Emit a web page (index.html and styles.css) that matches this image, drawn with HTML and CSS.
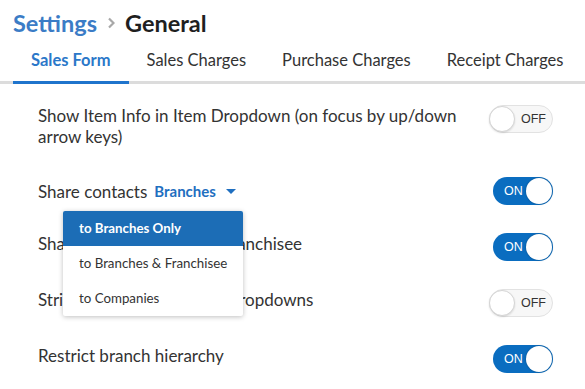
FILE: index.html
```html
<!DOCTYPE html>
<html lang="en">
  <head>
    <meta charset="UTF-8" />
    <meta name="viewport" content="width=device-width, initial-scale=1.0" />
    <title>Settings - General</title>
    <link rel="stylesheet" href="styles.css">
  </head>
  <body>
    <h1 class="page-title">
      <span class="crumb">Settings</span>
      <svg class="crumb-sep" width="8" height="12" viewBox="0 0 8 12">
        <path d="M2 1.5 L6.5 6 L2 10.5" fill="none" stroke="#a8a8a8" stroke-width="2.2" />
      </svg>
      <span class="current">General</span>
    </h1>

    <div class="tabs">
      <div class="tab active">Sales Form</div>
      <div class="tab">Sales Charges</div>
      <div class="tab">Purchase Charges</div>
      <div class="tab">Receipt Charges</div>
    </div>

    <div class="settings">
      <div class="row first">
        <div class="label">Show Item Info in Item Dropdown (on focus by up/down arrow keys)</div>
        <div class="toggle off"><span class="knob"></span><span class="state">OFF</span></div>
      </div>

      <div class="row share">
        <div class="label">
          Share contacts
          <span class="select">Branches <span class="caret"></span></span>
        </div>
        <div class="toggle on"><span class="state">ON</span><span class="knob"></span></div>

        <ul class="menu">
          <li class="selected">to Branches Only</li>
          <li>to Branches &amp; Franchisee</li>
          <li>to Companies</li>
        </ul>
      </div>

      <div class="row">
        <div class="label">Share items to Branch &amp; Franchisee</div>
        <div class="toggle on"><span class="state">ON</span><span class="knob"></span></div>
      </div>

      <div class="row">
        <div class="label">Strict branch wise data in dropdowns</div>
        <div class="toggle off"><span class="knob"></span><span class="state">OFF</span></div>
      </div>

      <div class="row">
        <div class="label">Restrict branch hierarchy</div>
        <div class="toggle on"><span class="state">ON</span><span class="knob"></span></div>
      </div>
    </div>
  </body>
</html>
```

FILE: styles.css
```css
body {
  margin: 0;
  font-family: Lato, "Open Sans", Arial, sans-serif;
  background-color: #fff;
  color: #333;
}

.page-title {
  margin: 0;
  padding: 6px 13px 0;
  height: 34px;
  display: flex;
  align-items: center;
  font-size: 23.5px;
  font-weight: 700;
}

.crumb {
  color: #3b7cc6;
}

.crumb-sep {
  margin: 0 10px 0 10px;
}

.current {
  color: #1f1f1f;
}

.tabs {
  display: flex;
  padding-left: 13px;
  border-bottom: 3px solid #dcdcdc;
  height: 41px;
}

.tab {
  padding: 10px 18px 0;
  font-size: 16.5px;
  color: #333;
  margin-bottom: -3px;
  border-bottom: 3px solid transparent;
}

.tab.active {
  color: #2b78c9;
  font-weight: 700;
  border-bottom-color: #1f74cc;
}

.settings {
  padding: 7px 32px 0 38px;
}

.row {
  display: flex;
  align-items: flex-start;
  justify-content: space-between;
  padding: 14px 0;
  position: relative;
}

.row.first {
  padding-bottom: 16px;
}

.label {
  font-size: 17px;
  line-height: 21px;
  max-width: 430px;
}

.share .label {
  display: flex;
  align-items: center;
  height: 28px;
}

.select {
  margin-left: 7px;
  color: #1f6fc0;
  font-weight: 700;
  font-size: 15px;
  display: flex;
  align-items: center;
}

.caret {
  margin-left: 10px;
  width: 0;
  height: 0;
  border-left: 5px solid transparent;
  border-right: 5px solid transparent;
  border-top: 5px solid #1f6fc0;
}

.toggle {
  flex-shrink: 0;
  height: 28px;
  border-radius: 14px;
  display: flex;
  align-items: center;
  box-sizing: border-box;
  font-family: "Liberation Sans", Arial, sans-serif;
  font-size: 12.5px;
}

.toggle.off {
  width: 64px;
  background-color: #f7f7f7;
  border: 1px solid #e2e2e2;
}

.toggle.on {
  width: 60px;
  background-color: #0a6dc0;
}

.knob {
  width: 26px;
  height: 26px;
  border-radius: 50%;
  background-color: #fff;
  box-sizing: border-box;
}

.off .knob {
  border: 1px solid #d5d5d5;
  margin-left: -1px;
  box-shadow: 0 1px 2px rgba(0, 0, 0, 0.12);
}

.off .state {
  margin-left: 6px;
  color: #333;
}

.on .state {
  color: #fff;
  margin-left: 11px;
  margin-right: auto;
}

.on .knob {
  margin-right: 1px;
  box-shadow: 0 0 2px rgba(0, 0, 0, 0.35);
}

.menu {
  position: absolute;
  left: 25px;
  top: 48px;
  width: 180px;
  margin: 0;
  padding: 0;
  list-style: none;
  background-color: #fff;
  border-radius: 2px;
  box-shadow: 0 1px 5px rgba(0, 0, 0, 0.25);
  z-index: 2;
}

.menu li {
  height: 35px;
  line-height: 35px;
  padding-left: 16px;
  font-size: 13.3px;
  color: #333;
}

.menu li.selected {
  background-color: #1c6db6;
  color: #fff;
  font-weight: 700;
  border-radius: 2px 2px 0 0;
}
```
